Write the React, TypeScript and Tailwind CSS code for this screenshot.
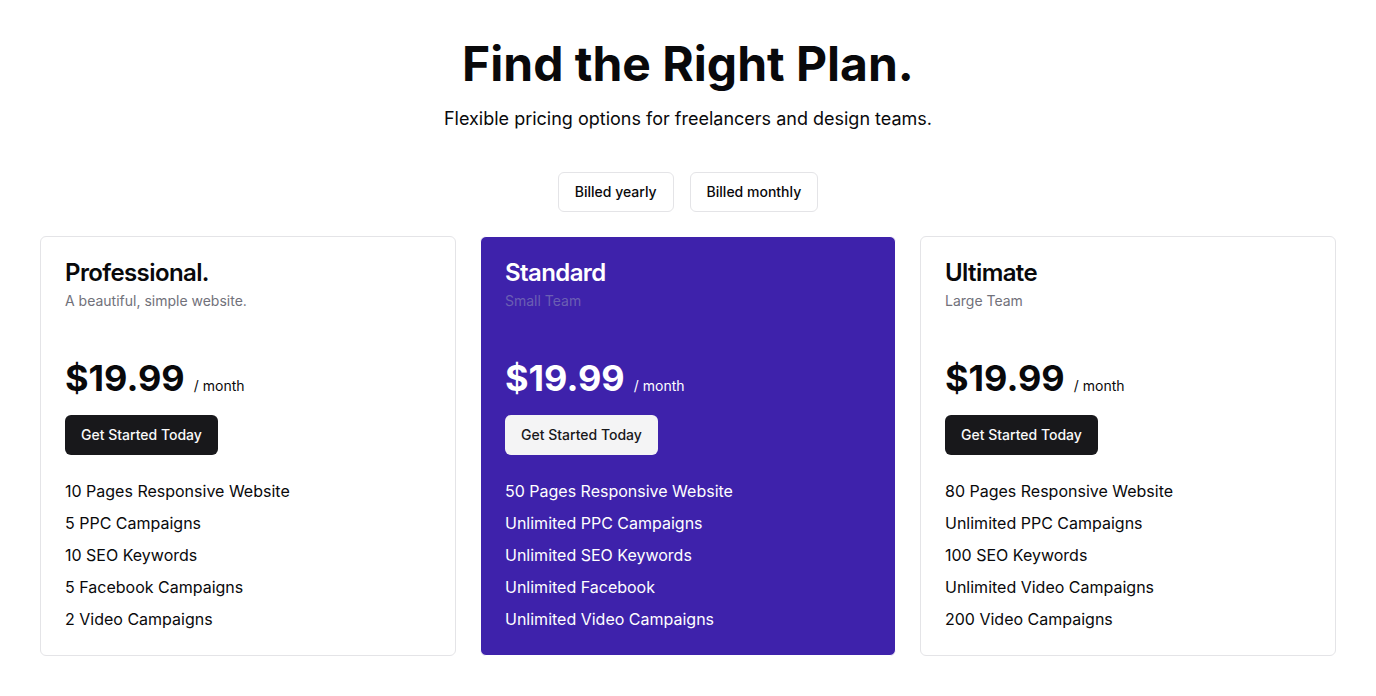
import React from "react";

type Plan = {
  name: string;
  sub: string;
  features: string[];
  featured?: boolean;
};

const plans: Plan[] = [
  {
    name: "Professional.",
    sub: "A beautiful, simple website.",
    features: [
      "10 Pages Responsive Website",
      "5 PPC Campaigns",
      "10 SEO Keywords",
      "5 Facebook Campaigns",
      "2 Video Campaigns",
    ],
  },
  {
    name: "Standard",
    sub: "Small Team",
    featured: true,
    features: [
      "50 Pages Responsive Website",
      "Unlimited PPC Campaigns",
      "Unlimited SEO Keywords",
      "Unlimited Facebook",
      "Unlimited Video Campaigns",
    ],
  },
  {
    name: "Ultimate",
    sub: "Large Team",
    features: [
      "80 Pages Responsive Website",
      "Unlimited PPC Campaigns",
      "100 SEO Keywords",
      "Unlimited Video Campaigns",
      "200 Video Campaigns",
    ],
  },
];

function PlanCard({ plan }: { plan: Plan }) {
  const f = plan.featured;
  return (
    <div
      className={
        f
          ? "flex-1 rounded-md border border-white bg-[#3e22ab] p-6 text-white"
          : "flex-1 rounded-md border border-[#e4e4e7] bg-white p-6 text-[#09090b]"
      }
    >
      <h3 className="text-2xl font-semibold leading-none tracking-tight">{plan.name}</h3>
      <p className={f ? "mt-1.5 text-sm text-[#6b5fb3]" : "mt-1.5 text-sm text-[#71717a]"}>{plan.sub}</p>
      <div className="mt-[49px] flex items-baseline gap-[9px]">
        <span className="text-4xl font-bold leading-none">$19.99</span>
        <span className="text-sm">/ month</span>
      </div>
      <button
        className={
          f
            ? "mt-[19px] h-10 rounded-md bg-[#f4f4f5] px-4 text-sm font-medium text-[#18181b]"
            : "mt-[19px] h-10 rounded-md bg-[#18181b] px-4 text-sm font-medium text-[#fafafa]"
        }
      >
        Get Started Today
      </button>
      <ul className="mt-6 flex flex-col gap-2">
        {plan.features.map((item) => (
          <li key={item} className="text-base leading-6">
            {item}
          </li>
        ))}
      </ul>
    </div>
  );
}

export default function App() {
  return (
    <div className="min-h-screen bg-white px-10 pt-10 font-['Inter',sans-serif] text-[#09090b]">
      <div className="flex flex-col items-center">
        <h1 className="text-5xl font-bold leading-none">Find the Right Plan.</h1>
        <p className="mt-[17px] text-lg leading-7">Flexible pricing options for freelancers and design teams.</p>
        <div className="mt-[39px] flex gap-4">
          <button className="h-10 rounded-md border border-[#e4e4e7] bg-white px-4 text-sm font-medium">
            Billed yearly
          </button>
          <button className="h-10 rounded-md border border-[#e4e4e7] bg-white px-4 text-sm font-medium">
            Billed monthly
          </button>
        </div>
      </div>
      <div className="mt-6 flex gap-6">
        {plans.map((p) => (
          <PlanCard key={p.name} plan={p} />
        ))}
      </div>
    </div>
  );
}
